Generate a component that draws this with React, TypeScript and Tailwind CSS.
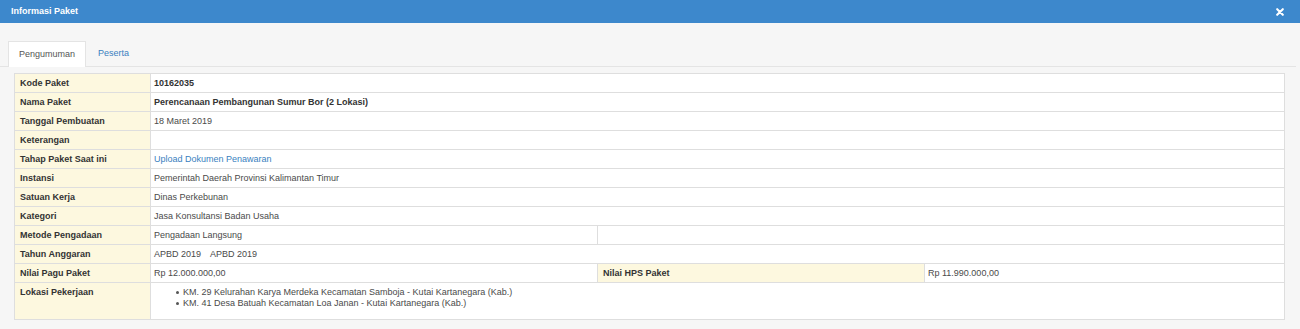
import React from 'react';

const font = { fontFamily: '"Liberation Sans", Arial, sans-serif' };

const Label: React.FC<{ children?: React.ReactNode; className?: string }> = ({ children, className = '' }) => (
  <td className={`bg-[#fdf8df] border border-[#dedede] pl-[5px] pr-[4px] font-bold text-[#333] align-middle ${className}`}>{children}</td>
);

const Val: React.FC<{ children?: React.ReactNode; colSpan?: number; className?: string }> = ({ children, colSpan, className = '' }) => (
  <td colSpan={colSpan} className={`bg-white border border-[#dedede] px-[3px] text-[#4a4a4a] align-middle ${className}`}>{children}</td>
);

const App: React.FC = () => {
  const rows: [string, React.ReactNode][] = [
    ['Kode Paket', <span className="font-bold text-[#333]">10162035</span>],
    ['Nama Paket', <span className="font-bold text-[#333]">Perencanaan Pembangunan Sumur Bor (2 Lokasi)</span>],
    ['Tanggal Pembuatan', '18 Maret 2019'],
    ['Keterangan', ''],
    ['Tahap Paket Saat ini', <span className="text-[#3a7fc0]">Upload Dokumen Penawaran</span>],
    ['Instansi', 'Pemerintah Daerah Provinsi Kalimantan Timur'],
    ['Satuan Kerja', 'Dinas Perkebunan'],
    ['Kategori', 'Jasa Konsultansi Badan Usaha'],
  ];

  const lokasi = [
    'KM. 29 Kelurahan Karya Merdeka Kecamatan Samboja - Kutai Kartanegara (Kab.)',
    'KM. 41 Desa Batuah Kecamatan Loa Janan - Kutai Kartanegara (Kab.)',
  ];

  return (
    <div className="w-[1300px] h-[329px] bg-[#f6f6f6] text-[9px] leading-[11px] overflow-hidden" style={font}>
      <div className="h-[23px] bg-[#3d88cc] flex items-center justify-between pl-[11px] pr-[16px]">
        <span className="text-white font-bold text-[9px]">Informasi Paket</span>
        <svg width="8" height="8" viewBox="0 0 10 10">
          <path d="M1.5 1.5 L8.5 8.5 M8.5 1.5 L1.5 8.5" stroke="white" strokeWidth="2.6" strokeLinecap="round" />
        </svg>
      </div>

      <div className="pt-[18px] pr-[4px]">
        <div className="flex pl-[8px] border-b border-[#e4e4e4] h-[26px] items-end">
          <div className="h-[26px] px-[10px] flex items-center bg-white border border-b-0 border-[#e4e4e4] text-[#555] -mb-px">
            Pengumuman
          </div>
          <div className="h-[26px] px-[12px] flex items-center text-[#3a7fc0]">Peserta</div>
        </div>

        <div className="pt-[6px] pl-[14px] pr-[12px]">
          <table className="w-[1271px] border-collapse table-fixed">
            <colgroup>
              <col className="w-[136px]" />
              <col className="w-[447px]" />
              <col className="w-[327px]" />
              <col />
            </colgroup>
            <tbody>
              {rows.map(([l, v]) => (
                <tr key={l} className="h-[19px]">
                  <Label>{l}</Label>
                  <Val colSpan={3}>{v}</Val>
                </tr>
              ))}
              <tr className="h-[19px]">
                <Label>Metode Pengadaan</Label>
                <Val>Pengadaan Langsung</Val>
                <Val colSpan={2}></Val>
              </tr>
              <tr className="h-[19px]">
                <Label>Tahun Anggaran</Label>
                <Val colSpan={3}>
                  <span>APBD 2019</span>
                  <span className="ml-[9px]">APBD 2019</span>
                </Val>
              </tr>
              <tr className="h-[19px]">
                <Label>Nilai Pagu Paket</Label>
                <Val>Rp 12.000.000,00</Val>
                <Label>Nilai HPS Paket</Label>
                <Val>Rp 11.990.000,00</Val>
              </tr>
              <tr className="h-[37px]">
                <Label className="align-top pt-[4px]">Lokasi Pekerjaan</Label>
                <Val colSpan={3} className="align-top pt-[4px]">
                  <div className="pl-[22px] flex flex-col">
                    {lokasi.map(t => (
                      <div key={t} className="flex items-center gap-[4px]">
                        <span className="w-[3px] h-[3px] rounded-full bg-[#555]" />
                        <span>{t}</span>
                      </div>
                    ))}
                  </div>
                </Val>
              </tr>
            </tbody>
          </table>
        </div>
      </div>
    </div>
  );
};

export default App;
